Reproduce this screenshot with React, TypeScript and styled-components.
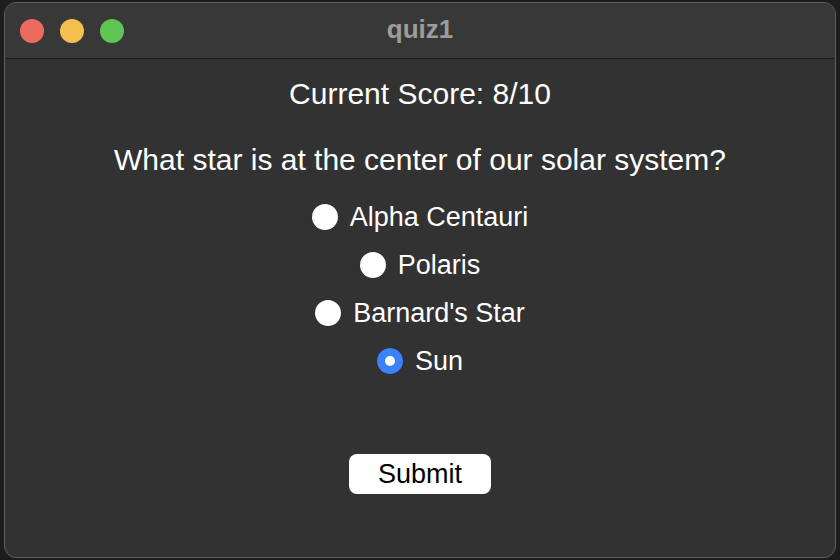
import React, { useState } from "react";
import styled, { createGlobalStyle } from "styled-components";

const Global = createGlobalStyle`
  html, body { margin: 0; padding: 0; background: #1d1d1d; }
  body { width: 840px; height: 560px; overflow: hidden; font-family: "Liberation Sans", Arial, sans-serif; }
`;

const Screen = styled.div`
  width: 840px;
  height: 560px;
  padding: 2px 4px;
  box-sizing: border-box;
`;

const Window = styled.div`
  width: 832px;
  height: 556px;
  box-sizing: border-box;
  border: 1px solid #5e5e5e;
  border-radius: 12px;
  background: #323232;
  overflow: hidden;
  display: flex;
  flex-direction: column;
`;

const TitleBar = styled.div`
  height: 55px;
  flex: none;
  background: #383838;
  border-bottom: 1px solid #1b1b1b;
  display: grid;
  grid-template-columns: 1fr auto 1fr;
  align-items: center;
`;

const Lights = styled.div`
  display: flex;
  gap: 16px;
  padding-left: 15px;
`;

const Light = styled.span<{ $c: string }>`
  width: 24px;
  height: 24px;
  border-radius: 50%;
  background: ${(p) => p.$c};
`;

const Title = styled.div`
  font-weight: bold;
  font-size: 26px;
  color: #9c9c9c;
  margin-top: -2px;
`;

const Content = styled.div`
  flex: 1;
  display: flex;
  flex-direction: column;
  align-items: center;
  padding-top: 17px;
  color: #ffffff;
`;

const Score = styled.div`
  font-size: 30px;
  line-height: 36px;
`;

const Question = styled.div`
  font-size: 30px;
  line-height: 36px;
  margin-top: 30px;
`;

const Options = styled.div`
  margin-top: 15px;
  display: flex;
  flex-direction: column;
  align-items: center;
`;

const Row = styled.label`
  height: 48px;
  display: flex;
  align-items: center;
  gap: 12px;
  font-size: 27px;
  cursor: pointer;
`;

const Radio = styled.span<{ $on: boolean }>`
  width: 26px;
  height: 26px;
  border-radius: 50%;
  box-sizing: border-box;
  background: ${(p) => (p.$on ? "#3a82f7" : "#ffffff")};
  box-shadow: 0 0 1px rgba(0, 0, 0, 0.5);
  display: flex;
  align-items: center;
  justify-content: center;
  &::after {
    content: "";
    width: 10px;
    height: 10px;
    border-radius: 50%;
    background: #ffffff;
    display: ${(p) => (p.$on ? "block" : "none")};
  }
`;

const Submit = styled.button`
  margin-top: 69px;
  width: 142px;
  height: 40px;
  border: none;
  border-radius: 8px;
  background: #ffffff;
  color: #000000;
  font-family: "Liberation Sans", Arial, sans-serif;
  font-size: 27px;
  padding: 0;
`;

const options = ["Alpha Centauri", "Polaris", "Barnard's Star", "Sun"];

export default function App() {
  const [sel, setSel] = useState(3);
  return (
    <>
      <Global />
      <Screen>
        <Window>
          <TitleBar>
            <Lights>
              <Light $c="#ed6a5e" />
              <Light $c="#f5bf4f" />
              <Light $c="#61c554" />
            </Lights>
            <Title>quiz1</Title>
            <div />
          </TitleBar>
          <Content>
            <Score>Current Score: 8/10</Score>
            <Question>What star is at the center of our solar system?</Question>
            <Options>
              {options.map((o, i) => (
                <Row key={o} onClick={() => setSel(i)}>
                  <Radio $on={sel === i} />
                  <span>{o}</span>
                </Row>
              ))}
            </Options>
            <Submit>Submit</Submit>
          </Content>
        </Window>
      </Screen>
    </>
  );
}
